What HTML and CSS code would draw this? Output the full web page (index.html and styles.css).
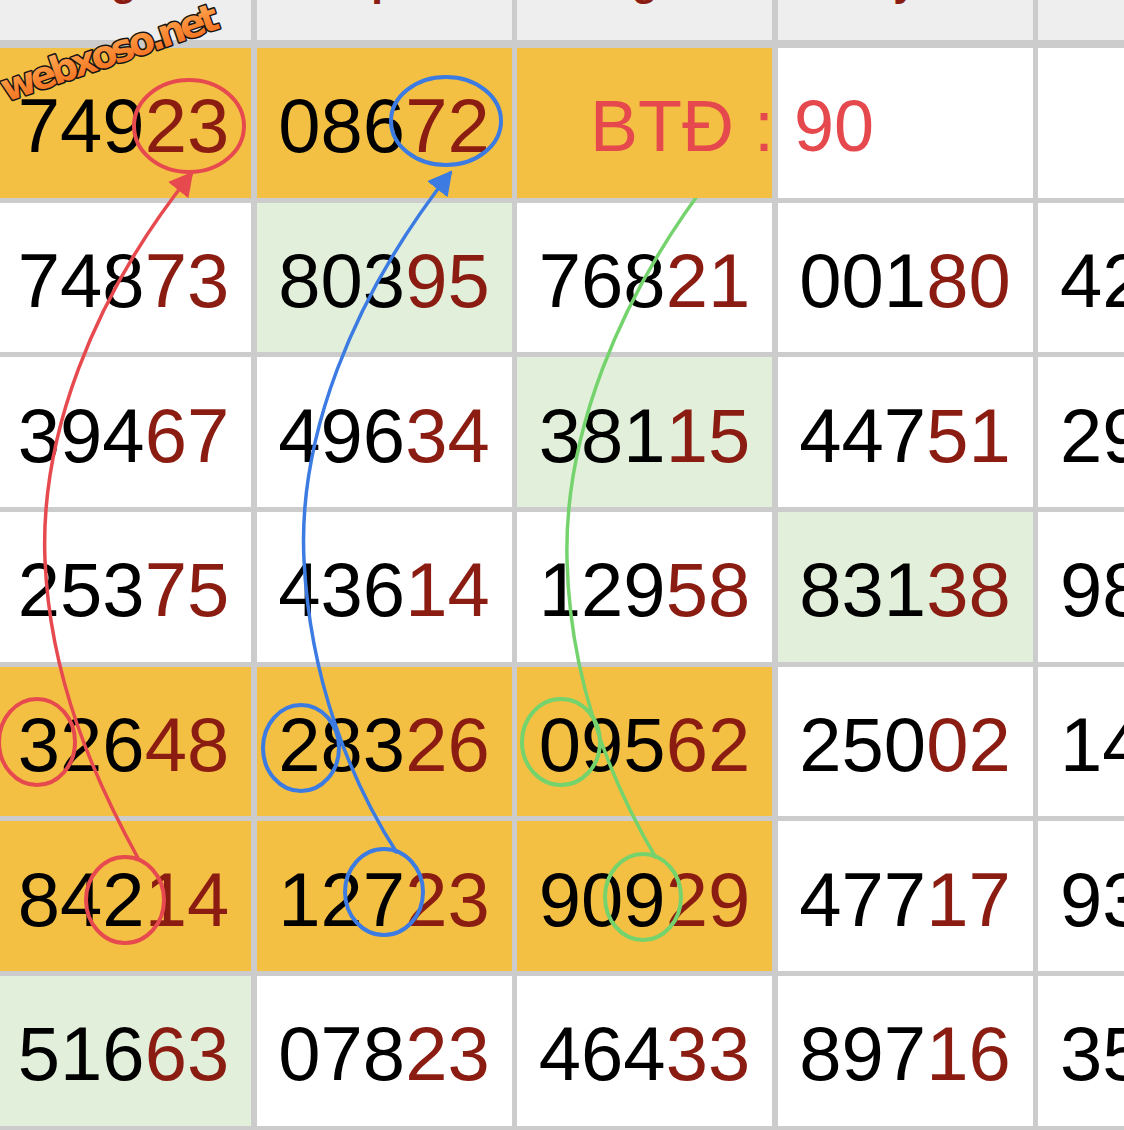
FILE: index.html
```html
<!DOCTYPE html>
<html lang="vi">
<head>
<meta charset="utf-8">
<title>Bảng số</title>
<link rel="stylesheet" href="styles.css">
</head>
<body>
<div class="sheet">
  <div class="grid">
    <div class="hd"><span>g</span></div>
    <div class="hd"><span>p</span></div>
    <div class="hd"><span>g</span></div>
    <div class="hd"><span>y</span></div>
    <div class="hd"></div>

    <div class="c o">749<span class="hi">23</span></div>
    <div class="c o">086<span class="hi">72</span></div>
    <div class="c o btd">BTĐ : 90</div>
    <div class="c"></div>
    <div class="c last"></div>

    <div class="c">748<span class="hi">73</span></div>
    <div class="c g">803<span class="hi">95</span></div>
    <div class="c">768<span class="hi">21</span></div>
    <div class="c">001<span class="hi">80</span></div>
    <div class="c last">42</div>

    <div class="c">394<span class="hi">67</span></div>
    <div class="c">496<span class="hi">34</span></div>
    <div class="c g">381<span class="hi">15</span></div>
    <div class="c">447<span class="hi">51</span></div>
    <div class="c last">29</div>

    <div class="c">253<span class="hi">75</span></div>
    <div class="c">436<span class="hi">14</span></div>
    <div class="c">129<span class="hi">58</span></div>
    <div class="c g">831<span class="hi">38</span></div>
    <div class="c last">98</div>

    <div class="c o">326<span class="hi">48</span></div>
    <div class="c o">283<span class="hi">26</span></div>
    <div class="c o">095<span class="hi">62</span></div>
    <div class="c">250<span class="hi">02</span></div>
    <div class="c last">14</div>

    <div class="c o">842<span class="hi">14</span></div>
    <div class="c o">127<span class="hi">23</span></div>
    <div class="c o">909<span class="hi">29</span></div>
    <div class="c">477<span class="hi">17</span></div>
    <div class="c last">93</div>

    <div class="c g">516<span class="hi">63</span></div>
    <div class="c">078<span class="hi">23</span></div>
    <div class="c">464<span class="hi">33</span></div>
    <div class="c">897<span class="hi">16</span></div>
    <div class="c last">35</div>
  </div>

  <svg class="marks" viewBox="0 0 1124 1130" xmlns="http://www.w3.org/2000/svg">
    <defs>
      <marker id="ar" viewBox="0 0 24 26" refX="22" refY="13" markerWidth="24" markerHeight="26" markerUnits="userSpaceOnUse" orient="auto"><path d="M0,0 L24,13 L0,26 Z" fill="#e64a4f"/></marker>
      <marker id="ab" viewBox="0 0 24 26" refX="22" refY="13" markerWidth="24" markerHeight="26" markerUnits="userSpaceOnUse" orient="auto"><path d="M0,0 L24,13 L0,26 Z" fill="#3b7be2"/></marker>
      <marker id="ag" viewBox="0 0 24 26" refX="22" refY="13" markerWidth="24" markerHeight="26" markerUnits="userSpaceOnUse" orient="auto"><path d="M0,0 L24,13 L0,26 Z" fill="#74d36c"/></marker>
    </defs>
    <g class="red">
      <ellipse cx="189" cy="126" rx="55" ry="46"/>
      <ellipse cx="37" cy="742" rx="38" ry="43"/>
      <ellipse cx="125" cy="900" rx="39" ry="43"/>
      <path class="ln" d="M139,860 C95,780 50,680 45,560 C40,440 90,300 192,173" marker-end="url(#ar)"/>
    </g>
    <g class="blue">
      <ellipse cx="446" cy="121" rx="55" ry="44"/>
      <ellipse cx="301" cy="748" rx="38" ry="43"/>
      <ellipse cx="384" cy="892" rx="39" ry="43"/>
      <path class="ln" d="M397,853 C350,780 310,680 304,560 C298,440 350,300 451,172" marker-end="url(#ab)"/>
    </g>
    <g class="green">
      <ellipse cx="561" cy="742" rx="39" ry="43"/>
      <ellipse cx="643" cy="897" rx="38" ry="43"/>
      <path class="ln" d="M656,858 C610,780 570,680 567,560 C564,440 615,300 716,171" marker-end="url(#ag)"/>
    </g>
  </svg>

  <svg class="logo" viewBox="0 0 240 120" xmlns="http://www.w3.org/2000/svg">
    <defs>
      <linearGradient id="og" x1="0" y1="0" x2="0" y2="1">
        <stop offset="0" stop-color="#ffb562"/>
        <stop offset="0.5" stop-color="#fb8a34"/>
        <stop offset="1" stop-color="#ef6a1a"/>
      </linearGradient>
    </defs>
    <text class="wm" x="6" y="102" transform="rotate(-19 6 102)">webxoso.net</text>
  </svg>
</div>
</body>
</html>
```
FILE: styles.css
```css
html, body {
  margin: 0;
  padding: 0;
  overflow: hidden;
  background: #ffffff;
}

.sheet {
  position: relative;
  width: 1124px;
  height: 1130px;
  overflow: hidden;
}

.grid {
  display: grid;
  grid-template-columns: repeat(5, 255px);
  grid-template-rows: 43px repeat(7, 149.67px);
  column-gap: 5.5px;
  row-gap: 5px;
  margin-left: -4px;
  width: max-content;
  padding-bottom: 5px;
  background: #cccccc;
  font-family: "Liberation Sans", Arial, sans-serif;
}

.hd {
  box-sizing: border-box;
  height: 43px;
  border-bottom: 3px solid #cccccc;
  background: #eeeeee;
  overflow: hidden;
  display: flex;
  justify-content: center;
  align-items: flex-start;
}

.hd span {
  font-weight: bold;
  font-size: 42px;
  line-height: 42px;
  color: #8b1c12;
  margin-top: -40px;
}

.c {
  box-sizing: border-box;
  background: #ffffff;
  display: flex;
  align-items: center;
  justify-content: center;
  padding-top: 6px;
  font-size: 76px;
  color: #000000;
  white-space: nowrap;
}

.hi {
  color: #8b1c12;
}

.o {
  background: #f4c043;
}

.g {
  background: #e2efda;
}

.btd {
  justify-content: flex-start;
  padding-left: 73px;
  font-size: 72px;
  color: #e5484d;
  z-index: 1;
}

.last {
  justify-content: flex-start;
  padding-left: 22px;
}

.marks {
  position: absolute;
  left: 0;
  top: 0;
  width: 1124px;
  height: 1130px;
  pointer-events: none;
}

.marks ellipse,
.marks path.ln {
  fill: none;
  stroke-width: 4;
}

.marks path.ln {
  stroke-width: 3.5;
}

.red ellipse, .red path.ln { stroke: #e64a4f; }
.blue ellipse, .blue path.ln { stroke: #3b7be2; }
.green ellipse, .green path.ln { stroke: #74d36c; }

.logo {
  position: absolute;
  left: 0;
  top: 0;
  width: 240px;
  height: 120px;
  pointer-events: none;
}

.wm {
  font-family: "DejaVu Sans", sans-serif;
  font-weight: bold;
  font-size: 38px;
  letter-spacing: -4.5px;
  fill: url(#og);
  stroke: #151515;
  stroke-width: 3;
  stroke-linejoin: round;
  paint-order: stroke;
}
```
